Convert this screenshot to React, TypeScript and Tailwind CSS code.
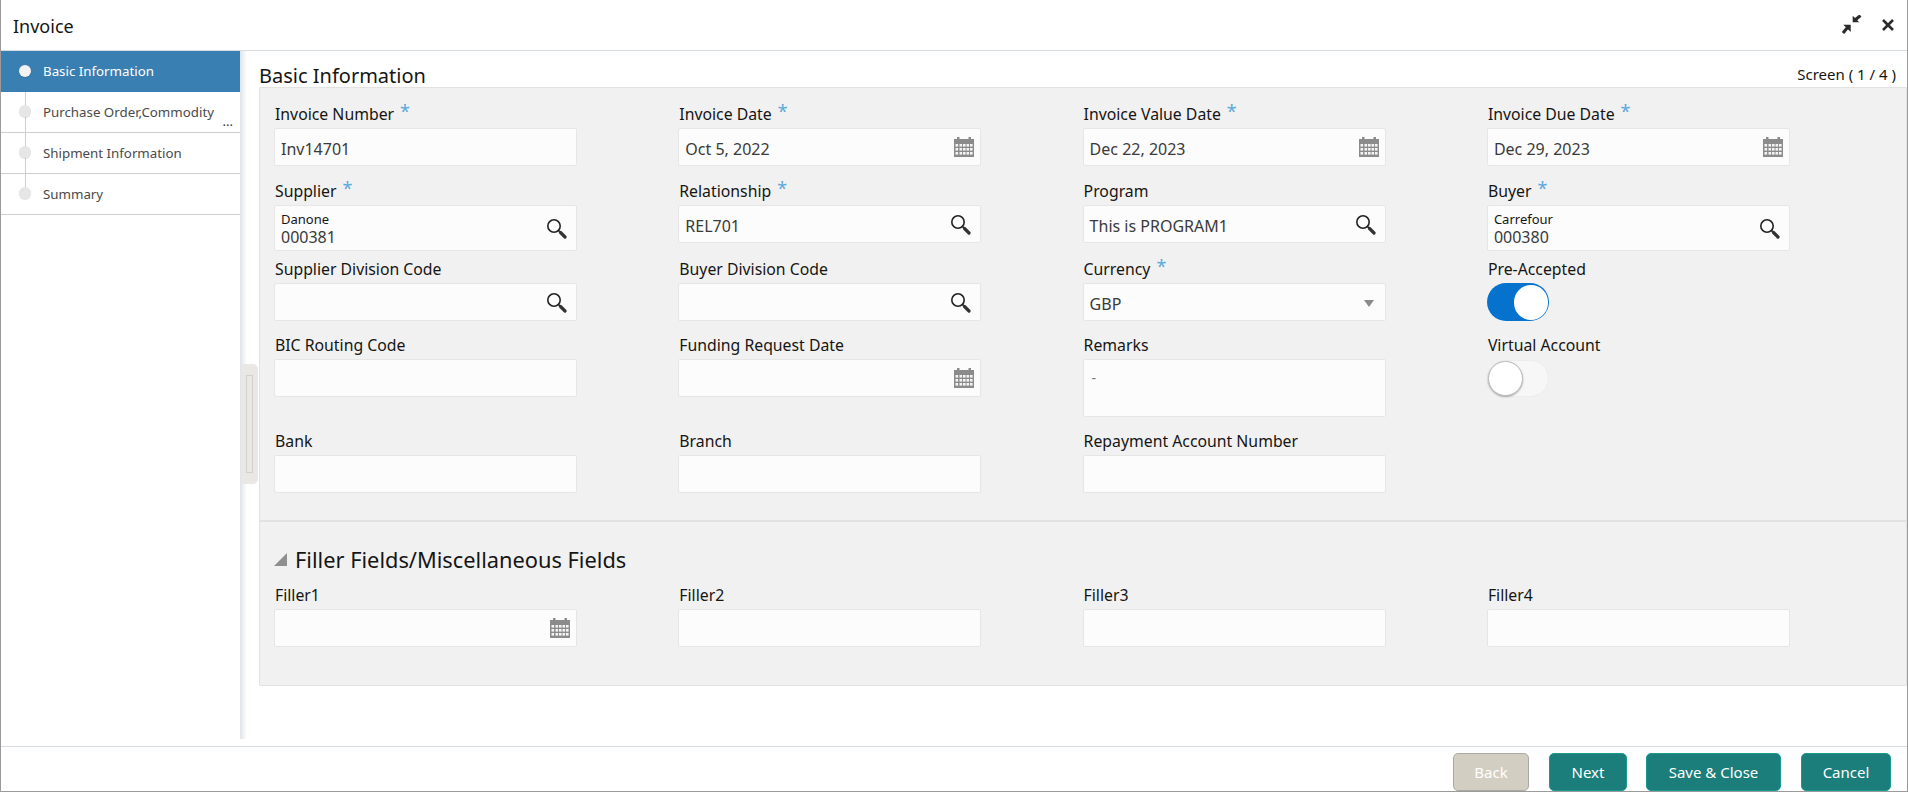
import React from "react";

const CalendarIcon = () => (
  <svg width="20" height="20" viewBox="0 0 20 20" className="mr-[-3px] shrink-0">
    <rect x="0" y="2" width="20" height="18" fill="#8b8b8b" />
    <rect x="3" y="0" width="2.5" height="4" fill="#8b8b8b" />
    <rect x="14.5" y="0" width="2.5" height="4" fill="#8b8b8b" />
    {[7, 11, 15].map((y) =>
      [1.5, 5.5, 9, 12.5, 16].map((x) => (
        <rect key={`${x}-${y}`} x={x} y={y} width="2.6" height="2.6" fill="#f4f4f4" />
      ))
    )}
  </svg>
);

const SearchIcon = () => (
  <svg width="21" height="21" viewBox="0 0 21 21" fill="none" className="shrink-0">
    <circle cx="8" cy="8" r="6.2" stroke="#222" strokeWidth="1.6" />
    <path d="M12.6 12.6 L14.5 14.5" stroke="#222" strokeWidth="1.6" />
    <path d="M14.5 14.5 L19 19" stroke="#333" strokeWidth="3.2" strokeLinecap="round" />
  </svg>
);

const Label = ({ text, required }: { text: string; required?: boolean }) => (
  <div className="flex h-[28px] items-start pl-[1px] pt-[3px] text-[15.8px] leading-[22px] text-[#161513]">
    <span>{text}</span>
    {required && <span className="relative top-[-3px] ml-[6px] text-[18px] leading-[22px] text-[#5aa9dc]">*</span>}
  </div>
);

const Input = ({ value, icon }: { value?: string; icon?: React.ReactNode }) => (
  <div className="flex h-[38px] w-[303px] items-center justify-between rounded-[2px] border border-[#e6e6e6] bg-[#fcfcfc] pl-[6px] pr-[9px] text-[16px] text-[#3a3a3a]">
    <span className="pt-[3px]">{value}</span>
    {icon}
  </div>
);

const Field = ({
  label,
  required,
  value,
  icon,
}: {
  label: string;
  required?: boolean;
  value?: string;
  icon?: React.ReactNode;
}) => (
  <div>
    <Label text={label} required={required} />
    <Input value={value} icon={icon} />
  </div>
);

const CodeField = ({ label, name, code }: { label: string; name: string; code: string }) => (
  <div>
    <Label text={label} required />
    <div className="flex h-[46px] w-[303px] items-center justify-between rounded-[2px] border border-[#e6e6e6] bg-[#fcfcfc] pl-[6px] pr-[9px]">
      <div className="flex flex-col pt-[2px]">
        <span className="text-[13px] leading-[17px] text-[#161513]">{name}</span>
        <span className="text-[16px] leading-[19px] text-[#3a3a3a]">{code}</span>
      </div>
      <SearchIcon />
    </div>
  </div>
);

const Toggle = ({ on }: { on?: boolean }) =>
  on ? (
    <div className="flex h-[38px] w-[62px] items-center justify-end rounded-full bg-[#0572ce] pr-[1px]">
      <div className="h-[35px] w-[34px] rounded-full bg-white" />
    </div>
  ) : (
    <div className="flex h-[37px] w-[62px] items-center rounded-full border border-[#ececec] bg-[#f7f7f7]">
      <div className="h-[35px] w-[35px] rounded-full border border-[#bbb] bg-white shadow-[0_1px_2px_rgba(0,0,0,0.3)]" />
    </div>
  );

const steps = ["Basic Information", "Purchase Order,Commodity", "Shipment Information", "Summary"];

export default function App() {
  return (
    <div className="flex h-[792px] w-[1908px] flex-col overflow-hidden border-x border-b border-[#9b9b9b] bg-white font-['Noto_Sans',sans-serif]">
      <div className="flex h-[51px] shrink-0 items-center justify-between border-b border-[#d6dce1] pl-[12px] pr-[13px]">
        <div className="pt-[3px] text-[18px] text-[#161513]">Invoice</div>
        <div className="flex items-center gap-[20px]">
          <svg width="20" height="20" viewBox="0 0 20 20" fill="#2b2b2b" stroke="none">
            <path d="M10.7 0.7 L10.7 7.3 L17.3 7.3 Z" />
            <path d="M13 5 L18.5 0.5" stroke="#2b2b2b" strokeWidth="3" />
            <path d="M1.3 9.7 L8.7 9.7 L8.7 17 Z" />
            <path d="M6 12 L1 18" stroke="#2b2b2b" strokeWidth="3" />
          </svg>
          <svg width="12" height="12" viewBox="0 0 12 12" stroke="#2b2b2b" strokeWidth="2.6">
            <path d="M1 1 L11 11 M11 1 L1 11" />
          </svg>
        </div>
      </div>

      <div className="flex min-h-0 flex-1">
        <div className="relative w-[239px] shrink-0">
          <div className="absolute left-[24px] top-[20px] h-[123px] w-[1px] bg-[#cfcfcf]" />
          <div className="absolute left-[24px] top-[20px] h-[20px] w-[1px] bg-[#36b5dc]" />
          {steps.map((s, i) => (
            <div
              key={s}
              className={`relative flex h-[41px] items-center pl-[18px] text-[13.3px] ${
                i === 0 ? "bg-[#3a7fb2] text-white" : "border-b border-[#cfcfcf] text-[#4a4a4a]"
              }`}
            >
              <div
                className={`mb-[2px] mr-[12px] h-[12px] w-[12px] rounded-full shadow-[0_1px_1px_rgba(0,0,0,0.12)] ${
                  i === 0 ? "bg-[#f2f2f2]" : "bg-[#e6e6e6]"
                }`}
              />
              <span className="pt-[1px]">{s}</span>
              {i === 1 && (
                <span className="absolute right-[7px] top-[21px] text-[13px] leading-[16px] text-[#333]">...</span>
              )}
            </div>
          ))}
        </div>

        <div className="relative flex min-w-0 flex-1 flex-col">
          <div className="absolute left-0 top-0 h-[688px] w-[7px] bg-gradient-to-r from-[#dfe3e8] to-white" />
          <div className="absolute left-[1px] top-[313px] flex h-[120px] w-[17px] items-center justify-center rounded-r-[5px] bg-[#e9e8e5]">
            <div className="h-[98px] w-[7px] border border-[#d2d1cd]" />
          </div>

          <div className="relative ml-[19px] flex h-[36px] shrink-0 items-end justify-between pr-[11px]">
            <div className="text-[20px] leading-[22px] text-[#161513]">Basic Information</div>
            <div className="text-[15px] leading-[26px] text-[#161513]">Screen ( 1 / 4 )</div>
          </div>

          <div className="relative ml-[19px] h-[599px] shrink-0 rounded-[1px] border border-[#e2e2e2] bg-[#f1f1f1]">
            <div className="h-[432px] pl-[14px] pt-[12px]">
              <div className="grid grid-cols-[repeat(4,303px)] grid-rows-[77px_78px_76px_96px_94px] gap-x-[101.3px]">
                <Field label="Invoice Number" required value="Inv14701" />
                <Field label="Invoice Date" required value="Oct 5, 2022" icon={<CalendarIcon />} />
                <Field label="Invoice Value Date" required value="Dec 22, 2023" icon={<CalendarIcon />} />
                <Field label="Invoice Due Date" required value="Dec 29, 2023" icon={<CalendarIcon />} />

                <CodeField label="Supplier" name="Danone" code="000381" />
                <Field label="Relationship" required value="REL701" icon={<SearchIcon />} />
                <Field label="Program" value="This is PROGRAM1" icon={<SearchIcon />} />
                <CodeField label="Buyer" name="Carrefour" code="000380" />

                <Field label="Supplier Division Code" icon={<SearchIcon />} />
                <Field label="Buyer Division Code" icon={<SearchIcon />} />
                <Field
                  label="Currency"
                  required
                  value="GBP"
                  icon={<div className="mr-[2px] mt-[3px] h-0 w-0 border-x-[5px] border-t-[7px] border-x-transparent border-t-[#8a8a8a]" />}
                />
                <div>
                  <Label text="Pre-Accepted" />
                  <Toggle on />
                </div>

                <Field label="BIC Routing Code" />
                <Field label="Funding Request Date" icon={<CalendarIcon />} />
                <div>
                  <Label text="Remarks" />
                  <div className="h-[58px] w-[303px] rounded-[2px] border border-[#e6e6e6] bg-[#fcfcfc] pl-[8px] pt-[7px] text-[14px] text-[#777]">
                    -
                  </div>
                </div>
                <div>
                  <Label text="Virtual Account" />
                  <div className="mt-[1px]">
                    <Toggle />
                  </div>
                </div>

                <Field label="Bank" />
                <Field label="Branch" />
                <Field label="Repayment Account Number" />
              </div>
            </div>

            <div className="border-t-2 border-[#e2e2e2] pl-[14px]">
              <div className="flex h-[59px] items-end pb-[6px]">
                <div className="mb-[9px] mr-[8px] h-0 w-0 border-b-[13px] border-l-[13px] border-b-[#8f8f8f] border-l-transparent" />
                <div className="text-[21.8px] leading-[30px] text-[#161513]">Filler Fields/Miscellaneous Fields</div>
              </div>
              <div className="grid grid-cols-[repeat(4,303px)] gap-x-[101.3px]">
                <Field label="Filler1" icon={<CalendarIcon />} />
                <Field label="Filler2" />
                <Field label="Filler3" />
                <Field label="Filler4" />
              </div>
            </div>
          </div>
        </div>
      </div>

      <div className="flex h-[45px] shrink-0 items-start justify-end border-t border-[#d6dce1] pr-[16px] pt-[6px] text-[15px] text-white">
        <button className="h-[38px] w-[76px] rounded-[5px] border border-[#aaa9a2] bg-[#d3cec2]">Back</button>
        <button className="ml-[20px] h-[38px] w-[78px] rounded-[5px] border border-[#1a9a92] bg-[#1b7e7a]">Next</button>
        <button className="ml-[19px] h-[38px] w-[135px] rounded-[5px] border border-[#1a9a92] bg-[#1b7e7a]">Save &amp; Close</button>
        <button className="ml-[20px] h-[38px] w-[90px] rounded-[5px] border border-[#1a9a92] bg-[#1b7e7a]">Cancel</button>
      </div>
    </div>
  );
}
